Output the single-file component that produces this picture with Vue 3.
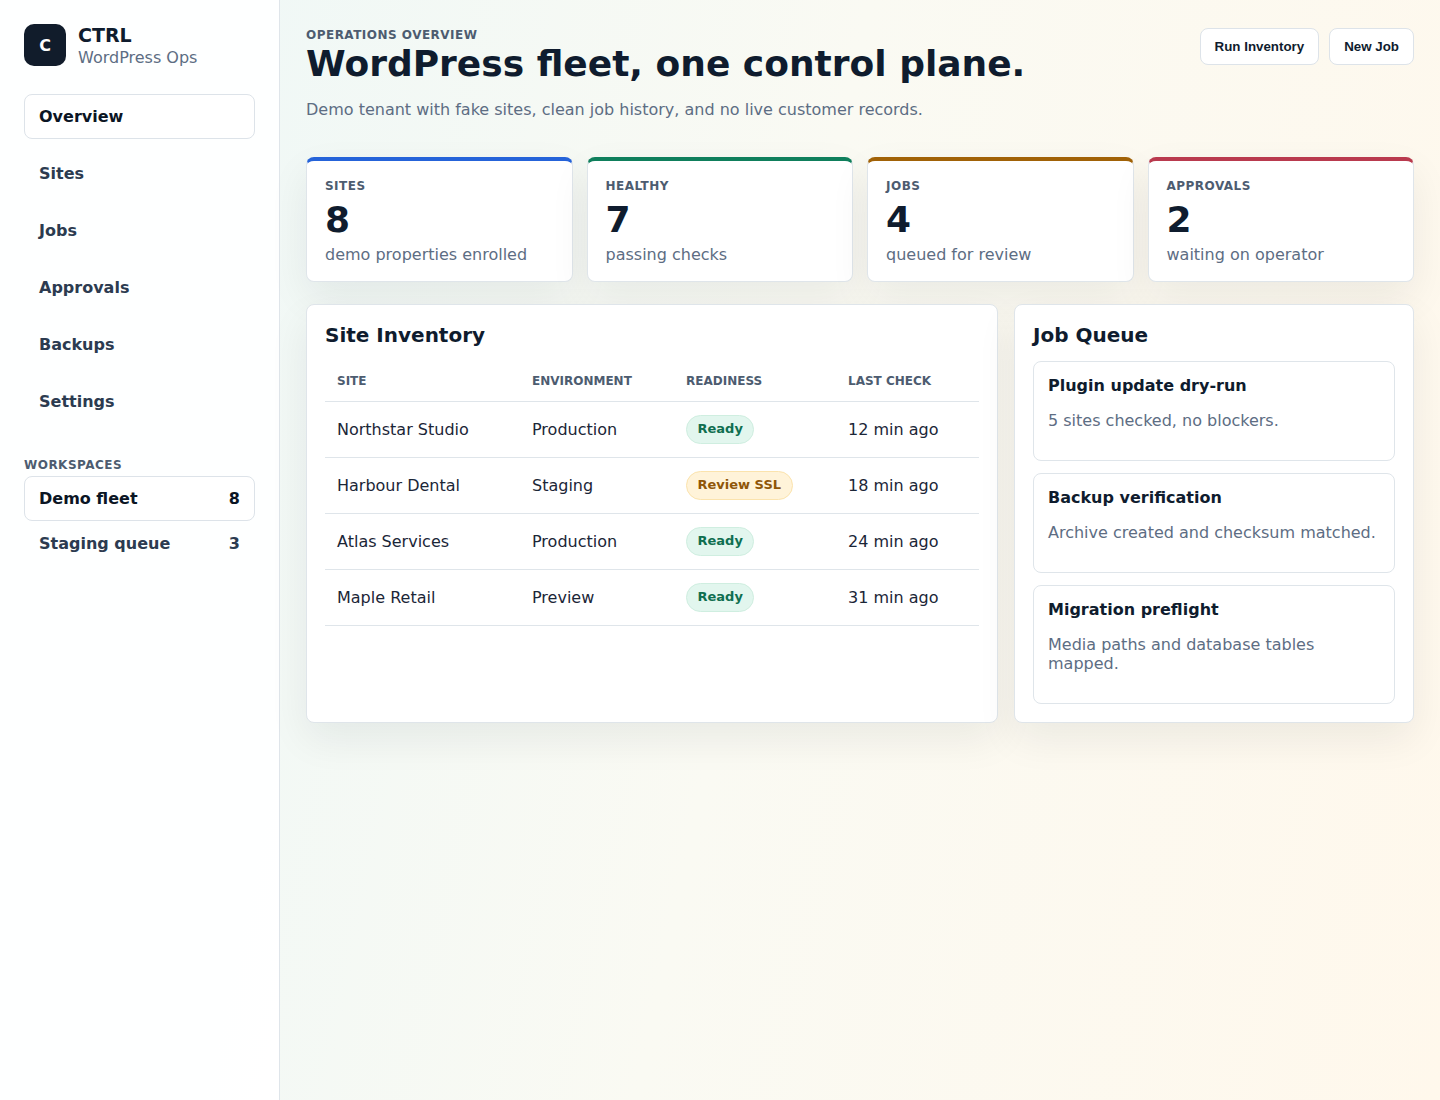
<script setup>
const navItems = ['Overview', 'Sites', 'Jobs', 'Approvals', 'Backups', 'Settings']

const workspaces = [
  { name: 'Demo fleet', count: 8, active: true },
  { name: 'Staging queue', count: 3, active: false }
]

const stats = [
  { label: 'Sites', value: 8, note: 'demo properties enrolled', tone: 'blue' },
  { label: 'Healthy', value: 7, note: 'passing checks', tone: 'green' },
  { label: 'Jobs', value: 4, note: 'queued for review', tone: 'amber' },
  { label: 'Approvals', value: 2, note: 'waiting on operator', tone: 'red' }
]

const sites = [
  { name: 'Northstar Studio', env: 'Production', status: 'Ready', warn: false, check: '12 min ago' },
  { name: 'Harbour Dental', env: 'Staging', status: 'Review SSL', warn: true, check: '18 min ago' },
  { name: 'Atlas Services', env: 'Production', status: 'Ready', warn: false, check: '24 min ago' },
  { name: 'Maple Retail', env: 'Preview', status: 'Ready', warn: false, check: '31 min ago' }
]

const jobs = [
  { title: 'Plugin update dry-run', text: '5 sites checked, no blockers.' },
  { title: 'Backup verification', text: 'Archive created and checksum matched.' },
  { title: 'Migration preflight', text: 'Media paths and database tables mapped.' }
]
</script>

<template>
  <div class="shell">
    <aside class="sidebar">
      <div class="brand">
        <div class="brand-mark">C</div>
        <div class="brand-text">
          <strong>CTRL</strong>
          <span>WordPress Ops</span>
        </div>
      </div>

      <nav class="nav">
        <a
          v-for="(item, i) in navItems"
          :key="item"
          class="nav-item"
          :class="{ active: i === 0 }"
        >{{ item }}</a>
      </nav>

      <p class="side-label">Workspaces</p>
      <div class="workspaces">
        <a
          v-for="ws in workspaces"
          :key="ws.name"
          class="nav-item ws-item"
          :class="{ active: ws.active }"
        >
          <span>{{ ws.name }}</span>
          <span>{{ ws.count }}</span>
        </a>
      </div>
    </aside>

    <main class="main">
      <header class="topbar">
        <div>
          <p class="kicker">Operations overview</p>
          <h1>WordPress fleet, one control plane.</h1>
          <p class="lede">Demo tenant with fake sites, clean job history, and no live customer records.</p>
        </div>
        <div class="actions">
          <button class="btn">Run Inventory</button>
          <button class="btn">New Job</button>
        </div>
      </header>

      <section class="stats">
        <article v-for="stat in stats" :key="stat.label" class="stat" :class="stat.tone">
          <span class="stat-label">{{ stat.label }}</span>
          <strong class="stat-value">{{ stat.value }}</strong>
          <span class="stat-note">{{ stat.note }}</span>
        </article>
      </section>

      <section class="panels">
        <div class="panel">
          <h2>Site Inventory</h2>
          <table>
            <thead>
              <tr>
                <th class="col-site">Site</th>
                <th class="col-env">Environment</th>
                <th class="col-ready">Readiness</th>
                <th>Last check</th>
              </tr>
            </thead>
            <tbody>
              <tr v-for="site in sites" :key="site.name">
                <td>{{ site.name }}</td>
                <td>{{ site.env }}</td>
                <td><span class="pill" :class="{ warn: site.warn }">{{ site.status }}</span></td>
                <td>{{ site.check }}</td>
              </tr>
            </tbody>
          </table>
        </div>

        <div class="panel">
          <h2>Job Queue</h2>
          <div class="jobs">
            <div v-for="job in jobs" :key="job.title" class="job">
              <strong>{{ job.title }}</strong>
              <p>{{ job.text }}</p>
            </div>
          </div>
        </div>
      </section>
    </main>
  </div>
</template>

<style>
html,
body {
  margin: 0;
  background: #fff;
}
</style>

<style scoped>
.shell {
  display: grid;
  grid-template-columns: 280px 1fr;
  min-height: 1100px;
  font-family: "DejaVu Sans", sans-serif;
  color: #0f1c2e;
  background: linear-gradient(102deg, #f0f8f6 15%, #fafaf3 52%, #fff8ec 100%);
}

/* Sidebar */
.sidebar {
  box-sizing: border-box;
  padding: 24px;
  background: rgba(255, 255, 255, 0.92);
  border-right: 1px solid #dfe5ea;
}

.brand {
  display: flex;
  align-items: flex-start;
  gap: 12px;
  margin-bottom: 28px;
}

.brand-mark {
  width: 42px;
  height: 42px;
  border-radius: 10px;
  background: #111c2b;
  color: #fff;
  display: flex;
  align-items: center;
  justify-content: center;
  font-size: 16px;
  font-weight: 700;
}

.brand-text {
  display: flex;
  flex-direction: column;
  height: 42px;
}

.brand-text strong {
  font-size: 19px;
  line-height: 22px;
}

.brand-text span {
  font-size: 16px;
  line-height: 24px;
  color: #5d6d83;
}

.nav {
  display: flex;
  flex-direction: column;
  gap: 12px;
}

.nav-item {
  box-sizing: border-box;
  height: 45px;
  display: flex;
  align-items: center;
  padding: 0 14px;
  border: 1px solid transparent;
  border-radius: 8px;
  font-size: 16px;
  font-weight: 700;
  color: #2c3b50;
}

.nav-item.active {
  background: #fff;
  border-color: #dde3e9;
  color: #0b1524;
}

.side-label {
  margin: 34px 0 4px;
  font-size: 12px;
  line-height: 14px;
  font-weight: 700;
  letter-spacing: 0.48px;
  text-transform: uppercase;
  color: #4d5c70;
}

.workspaces {
  display: flex;
  flex-direction: column;
}

.ws-item {
  justify-content: space-between;
}

/* Main */
.main {
  padding: 24px 26px;
  min-width: 0;
}

.topbar {
  display: flex;
  justify-content: space-between;
  align-items: flex-start;
  margin-bottom: 37px;
}

.kicker {
  margin: 4px 0 0;
  font-size: 12px;
  line-height: 14px;
  font-weight: 700;
  letter-spacing: 0.48px;
  text-transform: uppercase;
  color: #4d5c70;
}

h1 {
  margin: 0;
  font-size: 36px;
  line-height: 44px;
  font-weight: 700;
  color: #0f1c2e;
}

.lede {
  margin: 14px 0 0;
  font-size: 16px;
  line-height: 20px;
  color: #5d6d83;
}

.actions {
  display: flex;
  gap: 10px;
  margin-top: 4px;
}

.btn {
  height: 37px;
  padding: 0 14px;
  border: 1px solid #dde3e9;
  border-radius: 8px;
  background: #fff;
  color: #0f1c2e;
  font-family: "Liberation Sans", Arial, sans-serif;
  font-size: 13.33px;
  font-weight: 700;
}

.stats {
  display: grid;
  grid-template-columns: repeat(4, 1fr);
  gap: 14px;
  margin-bottom: 22px;
}

.stat {
  box-sizing: border-box;
  height: 125px;
  display: flex;
  flex-direction: column;
  padding: 18px;
  background: #fff;
  border: 1px solid #dfe5ea;
  border-top: 4px solid;
  border-radius: 8px;
  box-shadow: 0 16px 40px rgba(15, 28, 46, 0.07);
}

.stat.blue { border-top-color: #2563d9; }
.stat.green { border-top-color: #0f7f5c; }
.stat.amber { border-top-color: #a16207; }
.stat.red { border-top-color: #b93a4e; }

.stat-label {
  font-size: 12px;
  line-height: 14px;
  font-weight: 700;
  letter-spacing: 0.48px;
  text-transform: uppercase;
  color: #4d5c70;
}

.stat-value {
  margin-top: 6px;
  font-size: 36px;
  line-height: 42px;
  font-weight: 700;
}

.stat-note {
  margin-top: 4px;
  font-size: 16px;
  line-height: 20px;
  color: #5d6d83;
}

.panels {
  display: grid;
  grid-template-columns: 1fr 400px;
  gap: 16px;
}

.panel {
  box-sizing: border-box;
  height: 419px;
  padding: 18px;
  background: #fff;
  border: 1px solid #dfe5ea;
  border-radius: 8px;
  box-shadow: 0 16px 40px rgba(15, 28, 46, 0.07);
}

h2 {
  margin: 0;
  font-size: 20px;
  line-height: 24px;
  font-weight: 700;
  color: #0f1c2e;
}

table {
  width: 100%;
  margin-top: 14px;
  border-collapse: collapse;
  table-layout: fixed;
}

.col-site { width: 171px; }
.col-env { width: 130px; }
.col-ready { width: 138px; }

th {
  height: 40px;
  padding: 0 12px;
  text-align: left;
  font-size: 12px;
  font-weight: 700;
  text-transform: uppercase;
  color: #4d5c70;
  border-bottom: 1px solid #dfe5ea;
}

td {
  box-sizing: border-box;
  height: 56px;
  padding: 0 12px;
  font-size: 16px;
  color: #1b2637;
  border-bottom: 1px solid #dfe5ea;
}

.pill {
  display: inline-flex;
  align-items: center;
  vertical-align: middle;
  height: 29px;
  box-sizing: border-box;
  padding: 0 10.5px 2px;
  border: 1px solid #cfeee0;
  border-radius: 999px;
  background: #e2f6ee;
  color: #0f6f50;
  font-size: 13px;
  font-weight: 700;
  white-space: nowrap;
}

.pill.warn {
  background: #fff3d9;
  border-color: #fbe3ad;
  color: #8f5608;
}

.jobs {
  display: flex;
  flex-direction: column;
  gap: 12px;
  margin-top: 14px;
}

.job {
  box-sizing: border-box;
  padding: 14px 14px 29.8px;
  border: 1px solid #dfe5ea;
  border-radius: 8px;
}

.job strong {
  display: block;
  font-size: 16px;
  line-height: 20px;
  color: #0f1c2e;
}

.job p {
  margin: 15px 0 0;
  font-size: 16px;
  line-height: 19.2px;
  color: #5d6d83;
}
</style>
